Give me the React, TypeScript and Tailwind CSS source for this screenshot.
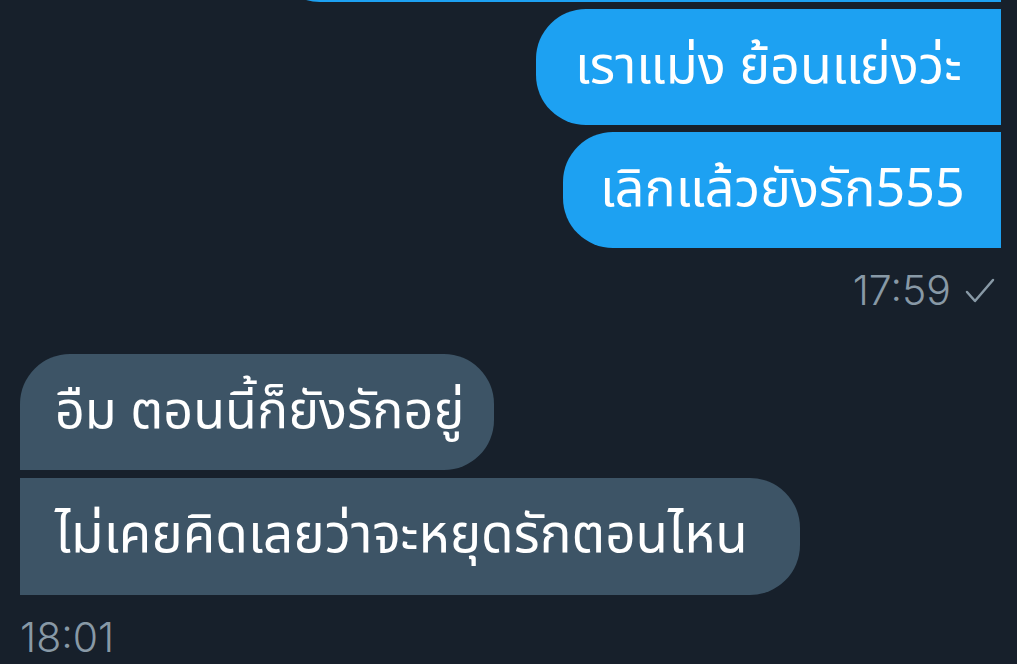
import React from 'react';

const thai = { fontFamily: '"Noto Sans Thai", "Noto Sans", "DejaVu Sans", sans-serif' };

const App: React.FC = () => {
  return (
    <div className="w-[1017px] h-[664px] overflow-hidden bg-[#17202b] text-white" style={thai}>
      <div className="flex flex-col items-end pr-[16px] gap-[7px]">
        <div className="w-[731px] h-[116px] mt-[-114px] bg-[#1da1f2] rounded-l-[50px]"></div>
        <div className="w-[465px] h-[116px] bg-[#1da1f2] rounded-l-[50px] flex items-center pl-[39px] text-[52px] leading-none">
          เราแม่ง ย้อนแย่งว่ะ
        </div>
        <div className="w-[438px] h-[116px] bg-[#1da1f2] rounded-l-[50px] flex items-center pl-[37px] text-[52px] leading-none">
          เลิกแล้วยังรัก555
        </div>
      </div>
      <div className="flex justify-end items-center pr-[22px] mt-[22px] gap-[14px] text-[#8899a6] text-[41px] leading-none font-light font-['Inter',sans-serif]">
        <span>17:59</span>
        <svg width="30" height="26" viewBox="0 0 30 26" fill="none">
          <polyline points="2,14 10,23 28,2" stroke="#8899a6" strokeWidth="2.5" strokeLinecap="round" strokeLinejoin="round" />
        </svg>
      </div>
      <div className="flex flex-col items-start pl-[20px] mt-[43px] gap-[8px]">
        <div className="w-[474px] h-[116px] bg-[#3d5466] rounded-tl-[50px] rounded-r-[50px] flex items-center pl-[35px] text-[52px] leading-none">
          อืม ตอนนี้ก็ยังรักอยู่
        </div>
        <div className="w-[780px] h-[117px] bg-[#3d5466] rounded-r-[50px] flex items-center pl-[35px] text-[53px] leading-none">
          ไม่เคยคิดเลยว่าจะหยุดรักตอนไหน
        </div>
      </div>
      <div className="pl-[20px] mt-[22px] text-[#8899a6] text-[41px] leading-none font-light font-['Inter',sans-serif]">
        18:01
      </div>
    </div>
  );
};

export default App;
